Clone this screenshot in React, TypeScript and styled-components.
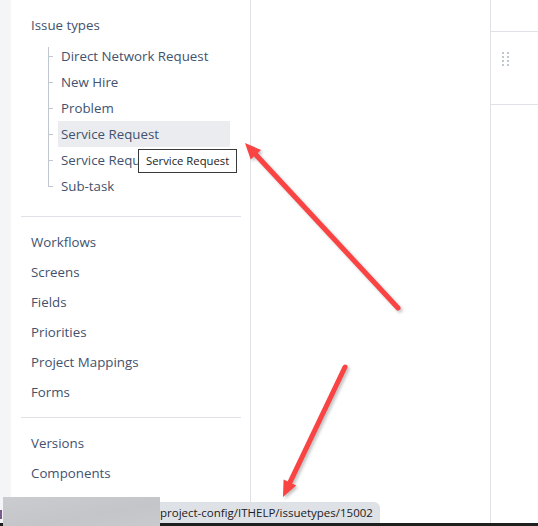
import React from "react";
import styled, { createGlobalStyle } from "styled-components";

const Global = createGlobalStyle`
  html, body { margin: 0; padding: 0; background: #fff; }
  body { width: 538px; height: 526px; overflow: hidden; font-family: "Open Sans", "Noto Sans", sans-serif; }
  * { box-sizing: border-box; }
`;

const Page = styled.div`
  position: relative;
  display: flex;
  width: 538px;
  height: 526px;
  overflow: hidden;
  background: #fff;
`;

const LeftStrip = styled.div`
  width: 11px;
  flex: none;
  background: #f4f5f7;
`;

const Sidebar = styled.nav`
  width: 240px;
  flex: none;
  border-right: 1px solid #dfe1e6;
  padding: 15px 9px 0 10px;
  display: flex;
  flex-direction: column;
  color: #42526e;
  font-size: 13.3px;
`;

const GroupTitle = styled.div`
  height: 20px;
  line-height: 20px;
  padding-left: 10px;
  margin-bottom: 8px;
`;

const Tree = styled.ul`
  list-style: none;
  margin: 0 0 7px 0;
  padding: 0 0 0 27px;
  position: relative;
`;

const TreeItem = styled.li<{ $last?: boolean; $first?: boolean }>`
  position: relative;
  height: 26px;
  line-height: 26px;
  padding-left: 10px;
  &::before {
    content: "";
    position: absolute;
    left: 0;
    top: ${(p) => (p.$first ? "4px" : "0")};
    height: ${(p) => (p.$last ? "13px" : p.$first ? "22px" : "26px")};
    border-left: 1px solid #c1c7d0;
  }
  &::after {
    content: "";
    position: absolute;
    left: 0;
    top: 13px;
    width: 5px;
    border-top: 1px solid #c1c7d0;
  }
`;

const ItemLabel = styled.span<{ $active?: boolean }>`
  display: block;
  height: 26px;
  padding-left: 3px;
  margin-right: 11px;
  background: ${(p) => (p.$active ? "#ebecf0" : "transparent")};
  white-space: nowrap;
`;

const Tooltip = styled.div`
  position: absolute;
  left: 138px;
  top: 149px;
  height: 24px;
  line-height: 22px;
  padding: 0 7px;
  background: #fff;
  border: 1px solid #3a3a3a;
  color: #222;
  font-size: 11.3px;
  white-space: nowrap;
  z-index: 2;
`;

const Separator = styled.hr`
  border: none;
  border-top: 1px solid #dfe1e6;
  margin: 10px 0;
  height: 0;
`;

const NavItem = styled.div`
  height: 30px;
  line-height: 30px;
  padding-left: 10px;
`;

const Middle = styled.div`
  flex: 1;
  border-right: 1px solid #dfe1e6;
`;

const RightPanel = styled.div`
  width: 47px;
  flex: none;
  display: flex;
  flex-direction: column;
`;

const RightHeader = styled.div`
  height: 32px;
  border-bottom: 1px solid #dfe1e6;
`;

const RightRow = styled.div`
  height: 73px;
  border-bottom: 1px solid #dfe1e6;
  padding: 20px 0 0 11px;
`;

const Handle = styled.div`
  display: grid;
  grid-template-columns: repeat(2, 2px);
  grid-auto-rows: 2px;
  column-gap: 3px;
  row-gap: 2px;
  & > span { background: #c1c7d0; }
`;

const StatusArea = styled.div`
  position: absolute;
  left: 0;
  bottom: 0;
  width: 538px;
  height: 29px;
  display: flex;
  align-items: flex-end;
  background: linear-gradient(to bottom, transparent 0, transparent 26px, #1f1f1f 26px);
`;

const Blurred = styled.div`
  width: 157px;
  height: 29px;
  margin-left: 3px;
  background: linear-gradient(170deg, #cbcccf 0%, #c4c5c8 60%, #c9cacd 100%);
`;

const UrlBar = styled.div`
  height: 21px;
  margin-bottom: 3px;
  padding: 0 7px 0 0;
  background: #dee1e6;
  border-top-right-radius: 6px;
  color: #202124;
  font-size: 11.5px;
  line-height: 21px;
  white-space: nowrap;
`;

const Mark = styled.div`
  position: absolute;
  left: 0;
  top: 13px;
  width: 2px;
  height: 9px;
  background: #7a5a8a;
`;

const Overlay = styled.svg`
  position: absolute;
  left: 0;
  top: 0;
  pointer-events: none;
  z-index: 3;
`;

function Arrow({ x1, y1, x2, y2 }: { x1: number; y1: number; x2: number; y2: number }) {
  const dx = x2 - x1;
  const dy = y2 - y1;
  const len = Math.hypot(dx, dy);
  const ux = dx / len;
  const uy = dy / len;
  const head = 16;
  const half = 7;
  const bx = x2 - ux * head;
  const by = y2 - uy * head;
  const px = -uy;
  const py = ux;
  const pts = `${x2},${y2} ${bx + px * half},${by + py * half} ${bx - px * half},${by - py * half}`;
  return (
    <g>
      <g transform="translate(2 2)" opacity="0.35" filter="url(#blur)">
        <line x1={x1} y1={y1} x2={bx + ux * 2} y2={by + uy * 2} stroke="#555" strokeWidth={5} strokeLinecap="round" />
        <polygon points={pts} fill="#555" />
      </g>
      <line x1={x1} y1={y1} x2={bx + ux * 2} y2={by + uy * 2} stroke="#fa4343" strokeWidth={5} strokeLinecap="round" />
      <polygon points={pts} fill="#fa4343" />
    </g>
  );
}

const issueTypes = [
  "Direct Network Request",
  "New Hire",
  "Problem",
  "Service Request",
  "Service Request",
  "Sub-task",
];

const mainNav = ["Workflows", "Screens", "Fields", "Priorities", "Project Mappings", "Forms"];
const releaseNav = ["Versions", "Components"];

export default function App() {
  return (
    <>
      <Global />
      <Page>
        <LeftStrip />
        <Sidebar>
          <GroupTitle>Issue types</GroupTitle>
          <Tree>
            {issueTypes.map((t, i) => (
              <TreeItem key={i} $last={i === issueTypes.length - 1} $first={i === 0}>
                <ItemLabel $active={i === 3}>{t}</ItemLabel>
              </TreeItem>
            ))}
          </Tree>
          <Separator />
          {mainNav.map((t) => (
            <NavItem key={t}>{t}</NavItem>
          ))}
          <Separator />
          {releaseNav.map((t) => (
            <NavItem key={t}>{t}</NavItem>
          ))}
        </Sidebar>
        <Middle />
        <RightPanel>
          <RightHeader />
          <RightRow>
            <Handle>
              {Array.from({ length: 8 }).map((_, i) => (
                <span key={i} />
              ))}
            </Handle>
          </RightRow>
        </RightPanel>
        <Tooltip>Service Request</Tooltip>
        <StatusArea>
          <Mark />
          <Blurred />
          <UrlBar>project-config/ITHELP/issuetypes/15002</UrlBar>
        </StatusArea>
        <Overlay width={538} height={526} viewBox="0 0 538 526">
          <defs>
            <filter id="blur" x="-20%" y="-20%" width="140%" height="140%">
              <feGaussianBlur stdDeviation="1.5" />
            </filter>
          </defs>
          <Arrow x1={398} y1={308} x2={245} y2={143} />
          <Arrow x1={345} y1={367} x2={283} y2={497} />
        </Overlay>
      </Page>
    </>
  );
}
